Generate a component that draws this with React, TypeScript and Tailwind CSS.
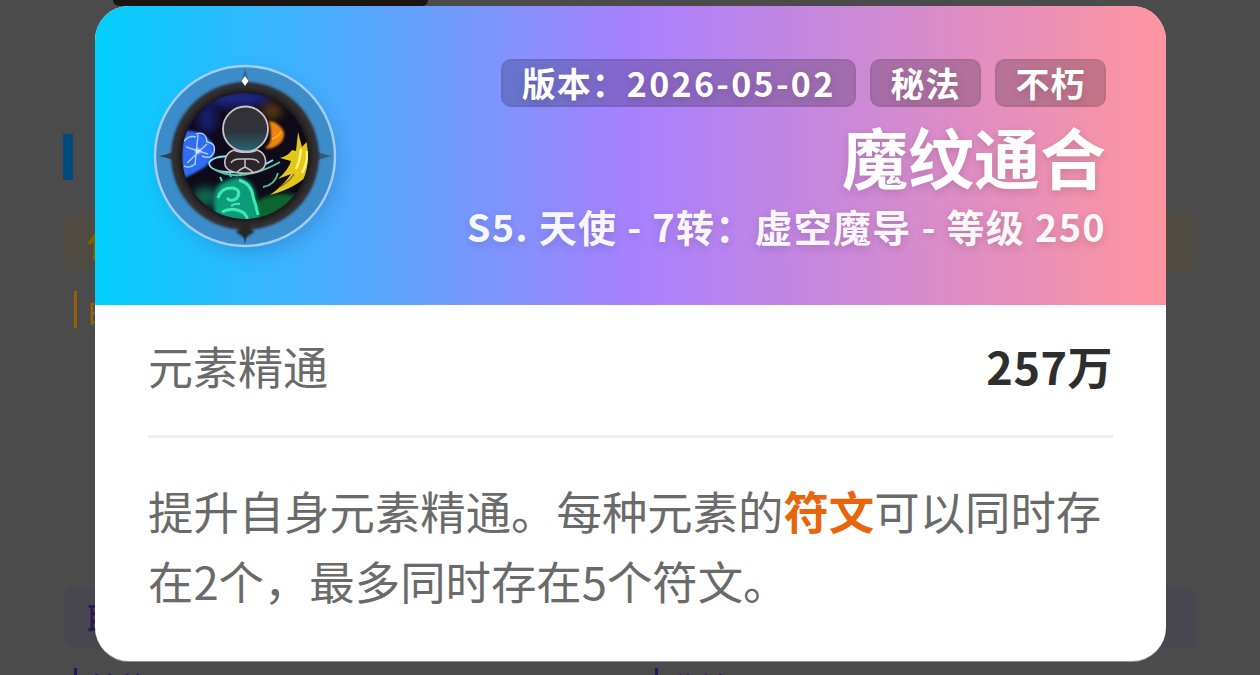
const cjk = "font-['Noto_Sans_CJK_SC','Noto_Sans',sans-serif]";

function SkillIcon() {
  return (
    <svg viewBox="150 60 190 190" className="h-[190px] w-[190px] shrink-0 overflow-visible">
      <defs>
        <filter id="b06" x="-30%" y="-30%" width="160%" height="160%">
          <feGaussianBlur stdDeviation="0.6" />
        </filter>
        <filter id="b1" x="-30%" y="-30%" width="160%" height="160%">
          <feGaussianBlur stdDeviation="1" />
        </filter>
        <filter id="b2" x="-40%" y="-40%" width="180%" height="180%">
          <feGaussianBlur stdDeviation="2.2" />
        </filter>
        <filter id="b4" x="-60%" y="-60%" width="220%" height="220%">
          <feGaussianBlur stdDeviation="5" />
        </filter>
        <filter id="shade" x="-40%" y="-40%" width="180%" height="180%">
          <feGaussianBlur stdDeviation="10" />
        </filter>
        <linearGradient id="head" x1="0" y1="0" x2="0" y2="1">
          <stop offset="0" stopColor="#332f36" />
          <stop offset="0.55" stopColor="#2f323b" />
          <stop offset="1" stopColor="#2b6676" />
        </linearGradient>
        <radialGradient id="rim">
          <stop offset="0.8" stopColor="#120f12" />
          <stop offset="0.93" stopColor="#2e2c2e" />
          <stop offset="1" stopColor="#333336" />
        </radialGradient>
        <clipPath id="inner">
          <circle cx="245" cy="155" r="63" />
        </clipPath>
      </defs>

      <circle cx="250" cy="163" r="88" fill="#27408c" opacity="0.28" filter="url(#shade)" />
      <circle cx="245" cy="155" r="90" fill="#3c8cc9" stroke="#a3cdf2" strokeWidth="2.5" />

      {/* compass points */}
      <path d="M245 67 Q247 80 255 90 L235 90 Q243 80 245 67 Z" fill="#2f668f" filter="url(#b06)" />
      <path d="M245 243 Q247 230 255 220 L235 220 Q243 230 245 243 Z" fill="#2b4055" filter="url(#b06)" />
      <path d="M159 155 Q172 157 182 165 L182 145 Q172 153 159 155 Z" fill="#2b4055" filter="url(#b06)" />
      <path d="M332 155 Q319 157 309 165 L309 145 Q319 153 332 155 Z" fill="#35597a" filter="url(#b06)" />

      <circle cx="245" cy="155" r="74" fill="url(#rim)" filter="url(#b1)" />
      <path d="M245 75 L248.5 80 L245 85 L241.5 80 Z" fill="#ffffff" filter="url(#b06)" />
      <path d="M236 231 L245 222 L254 231 L245 237 Z" fill="#262527" filter="url(#b1)" />

      <g clipPath="url(#inner)">
        <rect x="180" y="90" width="130" height="130" fill="#0e0a1a" />
        <ellipse cx="236" cy="97" rx="36" ry="9" fill="#1b2784" filter="url(#b4)" />
        <ellipse cx="207" cy="118" rx="10" ry="14" fill="#121a6c" filter="url(#b4)" />
        <ellipse cx="283" cy="208" rx="30" ry="15" fill="#08652f" filter="url(#b2)" />
        <ellipse cx="205" cy="196" rx="12" ry="10" fill="#0c6a50" filter="url(#b4)" />
        <ellipse cx="272" cy="110" rx="10" ry="8" fill="#5a370c" filter="url(#b4)" />

        {/* ice */}
        <path d="M182 130 Q202 128 212 142 Q218 155 205 166 Q192 174 182 178 Z" fill="#2f6cf0" filter="url(#b1)" />
        <g stroke="#a9c9ff" strokeWidth="1.5" fill="none" filter="url(#b06)">
          <path d="M186 146 L208 153 M198 134 L195 164 M187 162 L207 143" />
          <path d="M196 133 q10 -3 11 8 q9 1 7 10 q-3 8 -12 4" />
          <path d="M184 140 q5 -6 12 -4 M184 165 q6 3 12 -3" />
        </g>
        <circle cx="198" cy="150" r="2.5" fill="#e2edff" filter="url(#b1)" />

        {/* fire */}
        <path d="M269 120 q10 1 15 11 q1 8 -6 13 q-8 5 -13 3 q6 -4 6 -12 q0 -8 -2 -15 Z" fill="#ee860c" filter="url(#b1)" />
        <path d="M272 138 q6 -2 9 -7" stroke="#f8b040" strokeWidth="1.5" fill="none" filter="url(#b06)" />

        {/* lightning */}
        <path
          d="M298 131 L302 146 L311 136 L313 168 Q300 186 270 194 Q284 184 291 173 L278 178 Q289 168 291 160 L280 157 Q288 155 292 149 L296 150 Z"
          fill="#e3c61c"
          filter="url(#b06)"
        />
        <path d="M301 148 q-1 12 -5 20 M307 150 q1 12 -5 22" stroke="#fff27a" strokeWidth="2.5" fill="none" filter="url(#b06)" />
        <path d="M280 186 q10 -6 14 -13" stroke="#7a6a10" strokeWidth="1.2" fill="none" />

        {/* water */}
        <path d="M214 206 Q212 184 226 180 L236 176 Q252 178 255 192 Q258 206 260 220 L214 220 Z" fill="#0f9c7a" filter="url(#b2)" />
        <g stroke="#3fe8b4" strokeWidth="3" fill="none" filter="url(#b06)">
          <path d="M218 197 q3 -11 15 -10 q9 2 4 10 q-6 5 -10 0" />
          <path d="M239 179 q13 4 14 17 q3 8 5 18" />
          <path d="M222 211 q11 -6 22 1 q3 3 4 8" />
          <path d="M231 205 q4 -3 9 -2" strokeWidth="2" />
          <path d="M231 176 l-1 -4 M240 175 l1 -5 M222 180 l-2 -4" strokeWidth="1.8" />
        </g>

        {/* wind */}
        <g strokeWidth="1.8" fill="none" filter="url(#b06)">
          <path d="M232 155 q-20 0 -23 7 q1 8 18 9 q24 2 46 -12" stroke="#8fdcec" />
          <path d="M214 168 q16 10 40 4 q14 -4 26 -11" stroke="#58c8a8" />
          <path d="M263 186 q12 -2 15 -14" stroke="#4fc48a" />
        </g>
      </g>

      {/* meditating figure */}
      <circle cx="245.5" cy="128" r="22.5" fill="url(#head)" stroke="#c9c2c8" strokeWidth="1.8" filter="url(#b06)" />
      <g filter="url(#b06)">
        <path
          d="M234 149 C224 152 221 166 231 170 C238 173 252 173 259 170 C269 166 267 152 257 149 C252 152 239 152 234 149 Z"
          fill="#29272c"
          stroke="#c9c2c8"
          strokeWidth="1.6"
        />
        <path
          d="M231 162 Q233 158 240 158 L250 158 Q257 158 259 162 M245 158 L245 166 Q241 168 237 171 M245 166 Q249 168 253 171"
          stroke="#c9c2c8"
          strokeWidth="1.5"
          fill="none"
        />
      </g>
    </svg>
  );
}

function Badge({ children }: { children: React.ReactNode }) {
  return (
    <span className="rounded-[10px] border-2 border-black/5 bg-black/20 px-[18.5px] text-[34px] leading-[44px] font-bold tracking-[1px] text-white">
      {children}
    </span>
  );
}

export default function App() {
  return (
    <div className={`relative h-[675px] w-[1260px] overflow-hidden bg-[#4b4b4b] ${cjk}`}>
      {/* page behind the overlay */}
      <div className="flex h-full flex-col px-[63px]">
        <div className="ml-[50px] h-[6px] w-[315px] shrink-0 rounded-b-[14px] bg-[#1a1512]" />
        <div className="mt-[128px] h-[46px] w-[10px] shrink-0 bg-[#004a7d]" />
        <div className="mt-[32px] flex h-[60px] shrink-0 items-center rounded-[14px] bg-[#4f4a42] pl-[24px] text-[34px] font-medium text-[#8c5a00]">
          任务
        </div>
        <div className="mt-[19px] ml-[11px] flex h-[37px] shrink-0 items-center border-l-[3px] border-[#96600a] pl-[10px] text-[30px] text-[#96600a]">
          由此
        </div>
        <div className="mt-[259px] flex h-[62px] shrink-0 items-center rounded-[14px] bg-[#48464f] pl-[24px] text-[34px] font-medium text-[#2b1659]">
          职业
        </div>
        <div className="mt-[19px] grid shrink-0 grid-cols-[581px_1fr] pl-[11px] text-[30px] leading-[37px] text-[#2b1659]">
          <div className="border-l-[3px] border-[#2b1659] pl-[13px]">技能</div>
          <div className="border-l-[3px] border-[#2b1659] pl-[13px]">秘法</div>
        </div>
      </div>

      {/* skill detail dialog */}
      <div className="absolute top-[6px] left-[95px] flex h-[655px] w-[1071px] flex-col overflow-hidden rounded-[34px] bg-white shadow-[0_1px_0_rgba(255,255,255,0.4)]">
        <div className="flex h-[299px] shrink-0 items-center justify-between bg-[linear-gradient(90deg,#00cffd_0%,#a880ff_50%,#ff95a0_100%)] pr-[60px] pl-[55px]">
          <SkillIcon />
          <div className="flex flex-col items-end pb-[1px] [text-shadow:0_3px_8px_rgba(0,0,0,0.15)]">
            <div className="flex gap-[14px]">
              <Badge>
                版本：<span className="tracking-[2.3px]">2026-05-02</span>
              </Badge>
              <Badge>秘法</Badge>
              <Badge>不朽</Badge>
            </div>
            <div className="mt-[6px] text-[66px] leading-[84px] font-bold text-white">魔纹通合</div>
            <div className="mt-[4px] text-[38px] leading-[50px] font-bold tracking-[1.25px] text-white/95">
              S5. 天使 - 7转：虚空魔导 - 等级 250
            </div>
          </div>
        </div>
        <div className="flex flex-1 flex-col px-[53px]">
          <div className="flex h-[133px] shrink-0 items-center justify-between border-b-[3px] border-[#eeeeee] pb-[9px]">
            <span className="text-[45px] text-[#6a6a6a]">元素精通</span>
            <span className="text-[45px] font-bold tracking-[0.5px] text-[#2e2e2e]">257万</span>
          </div>
          <p className="mt-[37px] text-[45.4px] leading-[70px] text-[#6a6a6a]">
            提升自身元素精通。每种元素的<span className="leading-none font-bold text-[#e8650c]">符文</span>可以同时存在2个，最多同时存在5个符文。
          </p>
        </div>
      </div>
    </div>
  );
}
